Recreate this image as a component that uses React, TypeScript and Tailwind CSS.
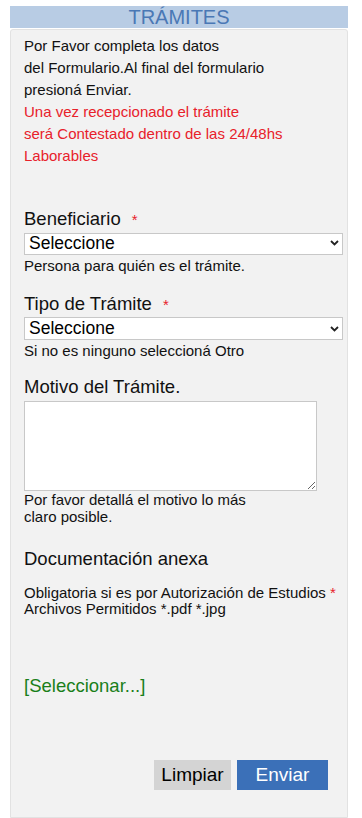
export default function App() {
  return (
    <div className="min-h-[818px] bg-white pt-[6px] font-['Liberation_Sans',Arial,sans-serif]">
      <div className="mx-[10px] w-[338px]">
        {/* Header */}
        <div className="flex h-[22px] items-center justify-center bg-[#b8cce4] text-[20px] leading-none text-[#4a78b5]">
          TRÁMITES
        </div>

        {/* Panel */}
        <div className="mt-px min-h-[789px] rounded-t-[3px] border border-[#e2e2e2] bg-[#f2f2f2] pl-[13px] pr-[4px] pt-[5px]">
          <div className="text-[15px] leading-[22px] text-[#111]">
            <p>Por Favor completa los datos</p>
            <p>del Formulario.Al final del formulario</p>
            <p>presioná Enviar.</p>
            <p className="text-[#e8212b]">Una vez recepcionado el trámite</p>
            <p className="text-[#e8212b]">será Contestado dentro de las 24/48hs</p>
            <p className="text-[#e8212b]">Laborables</p>
          </div>

          {/* Beneficiario */}
          <div className="mt-[42px]">
            <label className="block text-[18.5px] leading-[20px] text-[#111]">
              Beneficiario <span className="ml-[6px] text-[15px] text-[#e8212b]">*</span>
            </label>
            <div className="relative mt-[2px] w-[319px]">
              <select className="h-[22px] w-full appearance-none border border-[#c8c8c8] bg-white pl-[4px] text-[17.5px] leading-none text-black outline-none">
                <option>Seleccione</option>
              </select>
              <svg className="pointer-events-none absolute right-[4px] top-[8px]" width="9" height="6" viewBox="0 0 9 6">
                <path d="M1 1l3.5 3.5L8 1" fill="none" stroke="#222" strokeWidth="1.8" />
              </svg>
            </div>
            <p className="mt-[1px] text-[15px] leading-[17px] text-[#111]">Persona para quién es el trámite.</p>
          </div>

          {/* Tipo de Trámite */}
          <div className="mt-[20px]">
            <label className="block text-[18.5px] leading-[20px] text-[#111]">
              Tipo de Trámite <span className="ml-[6px] text-[15px] text-[#e8212b]">*</span>
            </label>
            <div className="relative mt-[2px] w-[319px]">
              <select className="h-[23px] w-full appearance-none border border-[#c8c8c8] bg-white pl-[4px] text-[17.5px] leading-none text-black outline-none">
                <option>Seleccione</option>
              </select>
              <svg className="pointer-events-none absolute right-[4px] top-[9px]" width="9" height="6" viewBox="0 0 9 6">
                <path d="M1 1l3.5 3.5L8 1" fill="none" stroke="#222" strokeWidth="1.8" />
              </svg>
            </div>
            <p className="mt-[1px] text-[15px] leading-[17px] text-[#111]">Si no es ninguno seleccioná Otro</p>
          </div>

          {/* Motivo */}
          <div className="mt-[18px]">
            <label className="block text-[18.5px] leading-[20px] text-[#111]">Motivo del Trámite.</label>
            <textarea className="mt-[4px] block h-[90px] w-[293px] border border-[#c8c8c8] bg-white outline-none" />
            <p className="text-[15px] leading-[17px] text-[#111]">
              Por favor detallá el motivo lo más
              <br />
              claro posible.
            </p>
          </div>

          {/* Documentación */}
          <div className="mt-[24px]">
            <p className="text-[18.5px] leading-[20px] text-[#111]">Documentación anexa</p>
            <p className="mt-[16px] text-[15px] leading-[16px] text-[#111]">
              Obligatoria si es por Autorización de Estudios <span className="text-[#e8212b]">*</span>
              <br />
              Archivos Permitidos *.pdf *.jpg
            </p>
          </div>

          <p className="mt-[59px] text-[18.5px] leading-[20px] text-[#1a7f1a]">[Seleccionar...]</p>

          {/* Buttons */}
          <div className="mt-[64px] flex justify-end gap-[6px] pr-[15px]">
            <button className="h-[30px] w-[77px] bg-[#d4d4d4] text-[19px] text-black">Limpiar</button>
            <button className="h-[30px] w-[91px] bg-[#3b70b8] text-[19px] text-white">Enviar</button>
          </div>
        </div>
      </div>
    </div>
  );
}
